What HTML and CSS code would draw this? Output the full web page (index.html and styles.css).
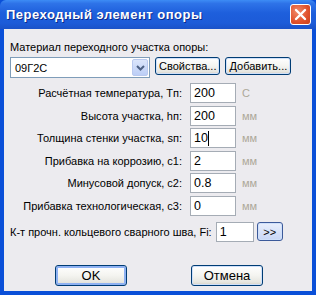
FILE: index.html
```html
<!DOCTYPE html>
<html lang="ru">
<head>
  <meta charset="UTF-8" />
  <title>Переходный элемент опоры</title>
  <link rel="stylesheet" href="styles.css">
</head>
<body>

<div class="window">
  <div class="titlebar">
    <span class="title">Переходный элемент опоры</span>
    <button class="close-btn">
      <svg width="13" height="13" viewBox="0 0 13 13">
        <path d="M2 2 L11 11 M11 2 L2 11" stroke="#fff" stroke-width="2.4" stroke-linecap="round"/>
      </svg>
    </button>
  </div>

  <div class="client">
    <div class="caption">Материал переходного участка опоры:</div>
    <div class="material-row">
      <div class="combo">
        <span class="combo-value">09Г2С</span>
        <span class="combo-arrow">
          <svg width="9" height="6" viewBox="0 0 9 6">
            <path d="M1 1 L4.5 4.5 L8 1" stroke="#4d6185" stroke-width="2" fill="none"/>
          </svg>
        </span>
      </div>
      <button class="btn small">Свойства...</button>
      <button class="btn small">Добавить...</button>
    </div>

    <div class="params">
      <div class="param">
        <label>Расчётная температура, Tп:</label>
        <div class="field">200</div>
        <span class="unit">С</span>
      </div>
      <div class="param">
        <label>Высота участка, hп:</label>
        <div class="field">200</div>
        <span class="unit">мм</span>
      </div>
      <div class="param">
        <label>Толщина стенки участка, sп:</label>
        <div class="field">10<span class="caret"></span></div>
        <span class="unit">мм</span>
      </div>
      <div class="param">
        <label>Прибавка на коррозию, c1:</label>
        <div class="field">2</div>
        <span class="unit">мм</span>
      </div>
      <div class="param">
        <label>Минусовой допуск, c2:</label>
        <div class="field">0.8</div>
        <span class="unit">мм</span>
      </div>
      <div class="param">
        <label>Прибавка технологическая, c3:</label>
        <div class="field">0</div>
        <span class="unit">мм</span>
      </div>
    </div>

    <div class="weld-row">
      <label>К-т прочн. кольцевого сварного шва, Fi:</label>
      <div class="field weld">1</div>
      <button class="btn more">&gt;&gt;</button>
    </div>

    <div class="actions">
      <button class="btn big default">OK</button>
      <button class="btn big">Отмена</button>
    </div>
  </div>
</div>

</body>
</html>
```

FILE: styles.css
```css
body {
  margin: 0;
  font-family: 'Liberation Sans', Arial, sans-serif;
  font-size: 11px;
  color: #000;
}

.window {
  width: 316px;
  height: 295px;
  box-sizing: border-box;
  background: #0a4fd8;
  display: flex;
  flex-direction: column;
  padding: 0 4px 4px;
}

.titlebar {
  height: 29px;
  flex: none;
  margin: 0 -4px;
  padding: 0 5px 0 6px;
  display: flex;
  align-items: center;
  justify-content: space-between;
  background: linear-gradient(#3d8cf5 0%, #2e73e8 12%, #1e5fdc 45%, #1c5bd8 80%, #1a52c8 100%);
  border-radius: 6px 6px 0 0;
}

.title {
  color: #fff;
  font-weight: bold;
  font-size: 13px;
  letter-spacing: 0.5px;
  text-shadow: 1px 1px 0 #0b2a8a;
}

.close-btn {
  width: 21px;
  height: 21px;
  padding: 0;
  border: 1px solid #fff;
  border-radius: 3px;
  background: radial-gradient(circle at 35% 35%, #f08a6a, #e0502a 60%, #c8401c);
  display: flex;
  align-items: center;
  justify-content: center;
}

.client {
  flex: 1;
  background: #ecebef;
  padding: 12px 6px 0 6px;
  display: flex;
  flex-direction: column;
}

.caption {
  height: 13px;
  line-height: 13px;
}

.material-row {
  display: flex;
  align-items: flex-start;
  margin-top: 3px;
}

.combo {
  width: 140px;
  height: 21px;
  box-sizing: border-box;
  border: 1px solid #7f9db9;
  background: #fff;
  display: flex;
  align-items: center;
  justify-content: space-between;
  padding: 1px;
}

.combo-value {
  padding-left: 3px;
}

.combo-arrow {
  width: 16px;
  height: 17px;
  box-sizing: border-box;
  border: 1px solid #b9c9ef;
  border-radius: 2px;
  background: linear-gradient(#dbe5fb, #bccef6);
  display: flex;
  align-items: center;
  justify-content: center;
}

.btn {
  font-family: 'Liberation Sans', Arial, sans-serif;
  font-size: 11px;
  color: #000;
  border: 1px solid #003c74;
  border-radius: 3px;
  background: linear-gradient(#ffffff, #f4f4f0 50%, #e6e6e0 85%, #d6d0c5);
  padding: 0;
  box-shadow: inset 0 0 0 1px #cfe0fa;
}

.btn.small {
  height: 18px;
  margin-left: 5px;
  padding: 0 3px;
}

.params {
  display: flex;
  flex-direction: column;
  gap: 2.5px;
  margin-top: 5px;
}

.param {
  display: flex;
  align-items: center;
  height: 20px;
}

.param label {
  width: 172px;
  text-align: right;
}

.field {
  height: 20px;
  box-sizing: border-box;
  border: 1px solid #a5acb5;
  background: #fff;
  font-size: 12.5px;
  line-height: 18px;
  padding-left: 3px;
  display: flex;
  align-items: center;
}

.param .field {
  width: 46px;
  margin-left: 8px;
}

.caret {
  display: inline-block;
  width: 1px;
  height: 15px;
  background: #000;
}

.unit {
  color: #aca899;
  margin-left: 6px;
}

.weld-row {
  display: flex;
  align-items: center;
  margin-top: 6px;
  height: 20px;
}

.field.weld {
  width: 38px;
  margin-left: 4px;
}

.btn.more {
  width: 26px;
  height: 19px;
  margin-left: 3px;
  background: linear-gradient(#e9effc, #c8d7f6);
  border-color: #3c5a9a;
}

.actions {
  display: flex;
  justify-content: space-between;
  padding: 0 43px 0 45px;
  margin-top: 23px;
}

.btn.big {
  width: 72px;
  height: 21px;
  font-size: 13px;
}

.btn.default {
  box-shadow: inset 0 0 0 2px #8eb1f2;
}
```
